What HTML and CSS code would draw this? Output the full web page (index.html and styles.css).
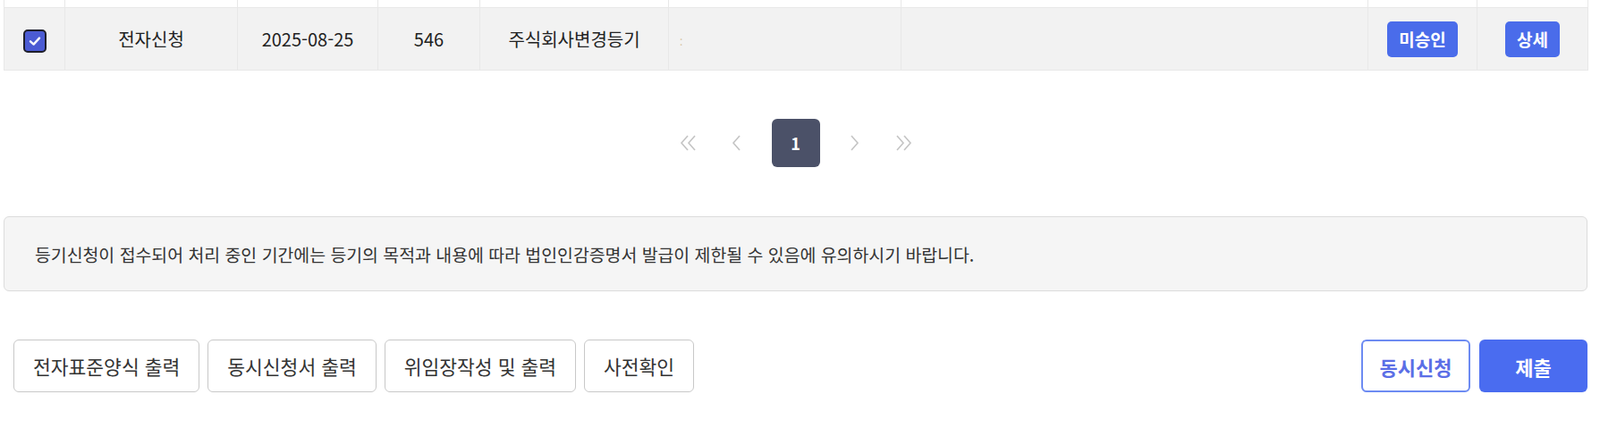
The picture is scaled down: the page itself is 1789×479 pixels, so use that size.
FILE: index.html
```html
<!DOCTYPE html>
<html lang="ko">
<head>
    <meta charset="UTF-8">
    <meta name="viewport" content="width=device-width, initial-scale=1.0">
    <title>등기신청 목록</title>
    <link rel="stylesheet" href="styles.css">
</head>
<body>
<div class="wrap">

    <table class="list">
        <colgroup>
            <col style="width:68px"><col style="width:193px"><col style="width:157px"><col style="width:114px">
            <col style="width:211px"><col style="width:260px"><col style="width:522px"><col style="width:122px"><col style="width:124px">
        </colgroup>
        <tbody>
            <tr class="cut"><td></td><td></td><td></td><td></td><td></td><td></td><td></td><td></td><td></td></tr>
            <tr class="sel">
                <td><span class="chk"><svg width="16" height="16" viewBox="0 0 16 16"><path d="M3 8.3 L6.6 11.6 L13 4.6" fill="none" stroke="#fff" stroke-width="2.4" stroke-linecap="round" stroke-linejoin="round"/></svg></span></td>
                <td>전자신청</td>
                <td>2025-08-25</td>
                <td>546</td>
                <td>주식회사변경등기</td>
                <td class="left"><span class="faint">:</span></td>
                <td></td>
                <td><button class="tag">미승인</button></td>
                <td><button class="tag">상세</button></td>
            </tr>
        </tbody>
    </table>

    <div class="pager">
        <a class="arr">
            <svg width="20" height="18" viewBox="0 0 20 18"><path d="M9 1 L2 9 L9 17 M17 1 L10 9 L17 17" fill="none" stroke="#c4c4c4" stroke-width="1.6"/></svg>
        </a>
        <a class="arr">
            <svg width="11" height="18" viewBox="0 0 11 18"><path d="M9 1 L2 9 L9 17" fill="none" stroke="#c4c4c4" stroke-width="1.6"/></svg>
        </a>
        <a class="num on">1</a>
        <a class="arr">
            <svg width="11" height="18" viewBox="0 0 11 18"><path d="M2 1 L9 9 L2 17" fill="none" stroke="#c4c4c4" stroke-width="1.6"/></svg>
        </a>
        <a class="arr">
            <svg width="20" height="18" viewBox="0 0 20 18"><path d="M3 1 L10 9 L3 17 M11 1 L18 9 L11 17" fill="none" stroke="#c4c4c4" stroke-width="1.6"/></svg>
        </a>
    </div>

    <div class="notice">
        등기신청이 접수되어 처리 중인 기간에는 등기의 목적과 내용에 따라 법인인감증명서 발급이 제한될 수 있음에 유의하시기 바랍니다.
    </div>

    <div class="actions">
        <div class="group">
            <button class="btn">전자표준양식 출력</button>
            <button class="btn">동시신청서 출력</button>
            <button class="btn">위임장작성 및 출력</button>
            <button class="btn">사전확인</button>
        </div>
        <div class="group">
            <button class="btn line">동시신청</button>
            <button class="btn fill">제출</button>
        </div>
    </div>

</div>
</body>
</html>
```

FILE: styles.css
```css
body { margin: 0; font-family: "Noto Sans CJK KR", "Noto Sans", sans-serif; color: #333; background: #fff; }
.wrap { width: 1771px; padding-left: 4px; }

.list { border-collapse: collapse; width: 1771px; table-layout: fixed; }
.list td { border: 1px solid #e8e8e8; text-align: center; font-size: 20px; color: #222; padding: 0; }
.list tr.cut td { height: 8px; border-top: none; }
.list tr.sel td { height: 69px; background: #f2f2f2; }
.list td.left { text-align: left; padding-left: 12px; }
.faint { color: #d8c6a6; font-size: 12px; }

.chk { display: inline-flex; align-items: center; justify-content: center; width: 22px; height: 22px; background: #4b5bd3; border: 2px solid #1f1f2a; border-radius: 5px; vertical-align: middle; }

.tag { font-family: inherit; font-size: 19px; font-weight: bold; color: #fff; background: #4a6cea; border: none; border-radius: 5px; height: 40px; padding: 0 13px; }

.pager { display: flex; justify-content: center; align-items: center; margin: 54px 0 55px; height: 54px; }
.pager a { display: flex; align-items: center; justify-content: center; height: 54px; }
.pager .arr { width: 54px; }
.pager a.num { width: 54px; margin: 0 12px; border-radius: 6px; font-size: 18px; font-weight: bold; color: #fff; }
.pager a.on { background: #4b5168; }

.notice { height: 82px; display: flex; align-items: center; padding-left: 34px; background: #f5f5f5; border: 1px solid #dcdcdc; border-radius: 6px; font-size: 19.4px; color: #333; box-sizing: content-box; width: 1735px; }

.actions { display: flex; justify-content: space-between; margin-top: 54px; padding-left: 11px; }
.group { display: flex; gap: 10px; }
.group:first-child { gap: 9px; }
.btn { font-family: inherit; font-size: 21.5px; color: #333; background: #fff; border: 1px solid #c8c8c8; border-radius: 6px; height: 59px; padding: 0 21px; }
.btn.line { width: 122px; padding: 0; color: #5b6ee6; font-weight: bold; font-size: 22px; border: 2px solid #6d8bf2; }
.btn.fill { width: 121px; padding: 0; color: #fff; font-weight: bold; font-size: 22px; background: #4a6cf0; border: none; }
```
